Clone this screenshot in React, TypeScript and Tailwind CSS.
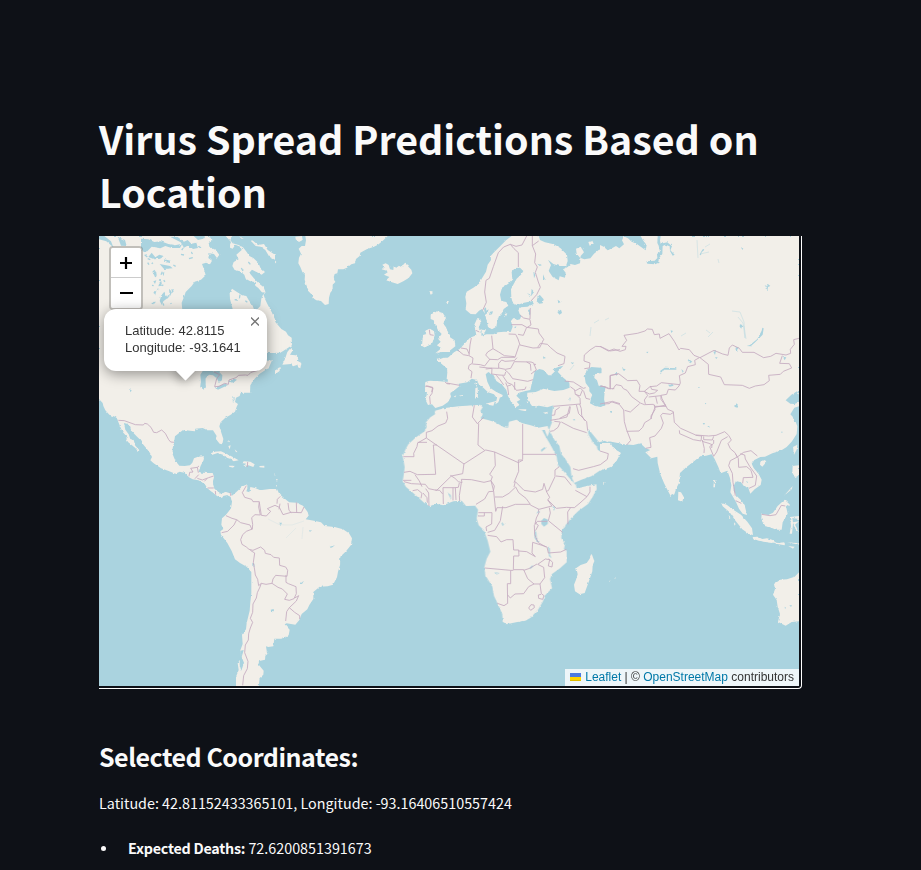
import React from "react";

type Region = {
  at: [number, number];
  land?: string;
  water?: string;
  borders?: string;
};

// Each region is drawn on a grid three times finer than the map, placed by its own origin.
const regions: Region[] = [
  {
    // Canada
    at: [95, 232],
    land: "M12 12H540V364L516 420 490 450 470 460V482H12Z",
    water:
      "M262 235L260 212 268 192 272 180 290 162 299 149 318 143 332 130 327 112 321 96 333 92 345 97 351 86 340 78 343 64 357 66 366 78 373 68 362 54 343 44 341 33 352 26 343 12H392L408 30 402 46 413 50 421 38 438 45 440 54 424 68 431 82 416 90 412 102 419 114 435 118 448 128 452 140 466 148 479 150 481 161 490 168 500 180 512 182 506 166 490 153 476 138 463 122 471 113 486 121 500 128 510 120 496 107 490 92 475 78 463 72 455 60 444 46 431 39 413 34 404 22 412 12H431L440 20 456 18 471 30 482 42 497 44 511 54 523 74 540 83V262L530 240 519 220 511 203 505 186 499 200 496 222 484 235H478L473 221 461 204 454 192 441 190 426 180 411 170 404 184 405 201 414 235ZM364 120L376 104 392 111 399 125 388 137 371 133ZM430 12H540V68L518 54 507 36 489 39 474 26 455 23ZM138 20L160 22 178 30 198 28 220 36 240 40 262 35 255 48 230 48 211 42 196 49 170 44 157 58 145 59 138 45ZM225 14L248 15 267 29 278 24 289 35 304 32 309 48 294 51 280 40 267 47 257 31ZM296 12L309 24 325 20 330 12ZM12 12L28 12 48 28 55 46 34 28 12 22ZM68 14L90 24 95 42 78 41ZM170 62L181 76 193 68 206 72 195 80 178 82 160 75ZM208 82L227 86 222 92 207 89ZM194 96L225 102 233 109 207 111ZM172 119L178 113 185 123 180 134ZM202 124L208 119 206 133ZM175 148L184 145 180 156ZM194 151L199 147 201 161 190 163ZM178 182L185 173 180 191ZM199 190L208 179 218 198 205 208 201 220 194 207ZM222 170L231 180 224 195ZM173 210L183 209 177 216ZM316 428L325 414 343 413 365 422 363 437 354 430 342 428 332 439 331 459 326 471 316 466 318 450ZM357 418L370 417 382 430 381 445 372 451 364 437ZM361 468L372 463 390 455 399 459 385 466 369 473ZM400 448L417 440 426 443 414 453ZM466 460L479 440 493 426 517 410 540 410V482H465ZM478 374L514 363 541 363 541 385 514 386Z",
    borders: "M357 420L374 428 365 440 359 464 372 463 389 454 400 457 402 444 423 437 431 430 451 429 459 430 468 421 489 415",
  },
  {
    // Greenland, Iceland, Labrador and Newfoundland
    at: [270, 232],
    land:
      "M106 12H353L340 25 324 38 312 44 290 52 271 62 269 72 258 81 255 94 244 97 231 107 220 112 204 112 202 124 194 126 191 136 196 150 188 158 188 173 181 182 177 197 176 216 165 219 153 207 139 205 132 200 127 190 117 179 112 167 107 154 104 143 105 128 97 120 91 105 85 94 87 77 93 65 86 50 95 42 105 42 108 25ZM76 14L96 12 98 24 87 30 77 22ZM335 112L344 107 337 98 347 94 356 99 360 112 370 114 371 103 379 107 387 101 395 106 403 94 412 99 416 105 424 113 427 124 416 138 400 148 383 156 366 151 355 147 348 145 358 135 342 128 353 121 350 116ZM0 75L11 81 19 90 11 99 4 117 0 123ZM0 228L14 253 16 270 34 291 48 299 54 310 65 317 66 340 50 350 31 362 0 363ZM65 344L67 357 60 368 77 370 87 379 82 386 94 393 91 409 84 406 81 399 69 403 63 396 37 398 45 381 52 360ZM0 411L17 415 29 405 29 417 16 426 0 435ZM494 241L506 244 499 253 518 242 528 258 519 274 525 287 540 310 540 360 507 360 496 364 515 348 502 340 513 330 505 321 517 306 505 282 497 279 491 265 482 261 482 248ZM459 309L472 305 466 296 480 290 492 298 494 310 486 335 464 346 455 339 464 334 460 324ZM502 384L521 377 540 377V445L530 441 533 411 515 396ZM466 450L480 446 540 450V480H465ZM481 177L488 179 484 188 480 184ZM528 207L536 208 532 217Z",
    borders: "M478 293L480 308 491 310M466 463L473 462 488 466 485 480M525 450L531 455 540 456",
  },
  {
    // Europe
    at: [420, 232],
    land:
      "M275 12L258 25 239 44 225 58 212 72 213 84 203 98 198 119 186 139 177 155 160 167 140 179 136 195 139 214 137 233 152 246 167 247 177 236 186 231 195 245 200 266 204 285 216 292 229 284 232 267 237 252 246 243 251 231 265 221 259 210 244 207 240 188 246 167 265 155 277 141 275 120 285 108 300 107 310 117 303 128 290 140 281 156 273 172 274 196 278 214 291 219 312 212 339 207 341 216 322 224 302 226 295 235 299 246 304 251 300 262 289 265 280 258 273 267 278 284 272 300 253 299 234 301 220 307 200 307 184 311 185 296 176 288 184 267 172 258 163 278 169 310 150 317 135 334 119 351 102 361 83 378 70 385 53 384 62 391 78 400 85 425 83 452 50 448 27 447 15 455 22 466 20 488 17 505 24 519 36 517 46 528 68 521 84 510 93 494 91 483 105 473 118 463 116 455 142 451 155 440 171 444 177 458 190 467 204 481 222 487 231 499 226 517 235 511 240 496 247 497 248 489 228 479 211 468 202 449 197 427 205 420 221 430 229 447 247 459 259 474 264 492 275 513 287 526 299 519 290 509 301 503 289 491 297 482 316 477 331 474 335 455 340 438 344 418 358 411 370 414 385 430 393 430 405 418 398 412 417 404 430 401 413 419 430 437 448 452 449 467 430 474 403 477 371 470 347 480 322 482 321 501 336 522 357 521 382 526 401 520 397 545 395 570H600V34L567 49 537 53 522 65 511 79 493 82 480 77 470 65 468 50 482 44 492 61 482 72 480 94 465 99 452 96 443 105 429 112 437 122 435 137 419 133 416 145 398 135 386 117 393 99 384 83 400 96 420 102 438 102 443 87 441 68 421 48 401 37 375 31 360 24 356 12ZM505 30L517 26 521 35 509 41ZM38 250L50 238 66 242 62 252 76 253 70 275 78 286 89 315 104 325 106 343 91 355 55 362 49 366 65 349 51 340 63 329 55 320 65 306 53 293 50 278 42 273 44 263 33 258ZM8 317L20 308 15 299 25 292 42 298 42 320 33 336 14 346 6 342ZM28 177L38 179 33 187ZM79 207L86 208 82 217ZM187 293L198 295 191 305 180 301ZM210 239L219 238 216 247 207 249ZM254 246L262 244 257 256ZM197 515L225 508 220 521 208 519ZM166 469L173 466 174 494 165 500ZM166 452L172 451 170 466ZM101 494L109 490 106 496ZM117 491L129 489 128 494ZM294 532L319 532 318 538 302 535ZM369 542L385 539 378 546ZM345 525L350 521 349 528ZM320 508L325 511 322 514Z",
    water:
      "M500 414L514 405 542 407 544 423 524 427 523 438 531 445 536 461 549 463 553 474 545 482 552 492 553 515 541 525 525 522 510 514 512 500 517 488 508 478 508 468 497 453 494 434ZM353 195L359 188 371 202 368 214 358 215 350 208ZM324 234L330 232 331 247 328 250ZM192 230L198 226 199 236 206 232 202 244 195 248ZM412 240L423 233 426 243 418 248ZM413 203L422 210 415 214ZM352 95L366 99 359 102ZM340 115L346 130 342 139ZM369 127L375 142 369 143ZM335 170L342 180 333 193ZM325 184L332 190 328 195ZM369 373L378 378 370 380ZM452 392L461 391 459 397ZM570 538L576 537 573 544ZM448 497L452 497 450 509ZM283 285L289 283 286 292Z",
    borders:
      "M188 235L199 211 194 180 198 145 208 139 220 104 235 62 251 45 271 37 288 43 306 39 320 12M271 37L282 50 295 62V105M337 12L337 41 356 27M337 41L347 66 344 92 352 105 346 121 355 150 361 166 350 188 333 207M301 250L311 258 330 262 331 228M274 278L306 278 320 286 355 291 357 303 371 322 359 347 339 348 300 339 294 321 287 307 266 306M320 286L310 310 294 307M330 264L333 279 322 286M215 311L219 350 203 360 197 369 209 382 233 383 245 376 285 376 298 338M219 350L236 360 253 371 284 374M154 318L150 339 147 371 159 378 157 394 147 400 145 411 156 419 153 438M113 354L130 368 146 371M123 348L141 351 147 365M157 396L181 398 194 402 210 381M178 405L204 408 236 409 236 395 245 384 255 388 283 386 291 377M236 408L256 412 272 409 283 389 333 390 341 393 349 414 333 426M320 390L331 396 333 416M348 397L341 398M255 414L266 423 278 440 323 448 339 443M197 411L216 409 215 426 237 429 254 430 257 420M229 430L240 443 251 459M248 431L262 452 277 458 289 475 315 472 318 464M257 452L263 466 266 489M284 450L284 473M263 462L273 459M119 460L80 453M18 462L39 468 36 484 29 494 31 516M167 295L178 300M353 346L361 334 382 337 392 347 411 363 435 373 432 395 414 401M434 447L460 450 490 469 497 467M451 464L467 476 481 468 491 478 498 499 510 502M464 474L466 487 480 492 487 475M400 523L481 516 480 499 468 487M419 526L406 535 404 549 395 550M451 524L448 544 419 559M479 516L484 530 485 550 494 566M493 410L508 408 510 393 492 387 493 369 510 354 527 343 543 344 570 357 600 353M544 461L565 470 583 470M570 470V431L595 426M552 516L567 515 577 508 600 515",
  },
  {
    // Siberia and Central Asia
    at: [600, 232],
    land: "M0 12H597V570H0Z",
    water:
      "M0 12H72L66 25 72 37 58 49 48 42 33 50 23 55 11 44 0 39ZM69 12H122L129 25 140 39 137 55 120 43 111 36 95 29 84 19ZM173 12H182L180 26 182 35 202 31 216 43 211 55 224 68 218 71 210 57 209 43 196 38 188 42 187 66 178 77 174 93 165 97 142 95 139 88 164 86 172 78 171 66 180 60 176 41 172 33ZM0 460L17 464 14 479 12 503 16 520 0 524ZM0 406L5 410 4 424 0 423ZM181 427L181 416 194 407 229 409 229 413 192 413 187 421ZM440 342L450 339 472 321 485 296 487 287 491 289 488 308 467 329 452 343ZM557 505L574 488 591 478 597 488V511L583 516 571 515ZM571 547L583 527 597 523V570H583L578 554ZM205 459L217 456 221 461 209 464ZM340 359L348 357 345 369ZM345 376L353 376 349 381ZM405 521L413 520 412 527 405 525ZM291 465L299 465 298 468ZM312 514L319 513 317 517ZM407 346L413 346 411 359 407 356ZM549 375L559 376 554 385ZM261 381L270 384 277 389 270 394ZM66 409L77 412 72 418ZM44 424L52 423 50 432ZM30 538L37 538 34 543ZM138 360L145 359 143 364ZM212 295L219 297 214 303ZM244 411L251 418 248 422ZM424 48L430 49 427 54ZM501 154L511 162 504 165 502 178 500 168 494 160 503 163ZM420 277L427 279 424 290 419 284ZM299 67L308 52 316 51 305 61 302 73Z",
    borders:
      "M0 343L25 357 42 351 60 358 76 353 78 343 66 343 80 325 72 310 112 304 135 297 142 291 157 292 163 308 178 306 180 319 207 305 223 328 237 354 242 349 268 353 282 370 300 377 342 355 368 366 384 370 388 348 397 339 418 349 427 361 462 361 491 377 512 373 528 364 558 369 572 364 571 352 583 337 581 323 597 319M300 377L325 397 326 427 362 435 373 458 427 460 448 469 466 462 492 458 508 446 506 430 541 427 550 418 575 408 568 395 539 394 547 371M298 377L284 385 286 398 263 404 256 423 238 431 241 453 237 462 226 474 205 472 200 487 183 490 186 500M0 463L15 464 31 471V430L56 425 83 446 111 445 120 461 117 478 133 478 150 464 170 462 184 452 239 458M38 472L48 458 64 461 70 470 81 475 95 494 121 513 133 518 160 517 165 523 198 523 183 502 183 491 146 495M133 478L148 486 163 483 173 475 155 472 151 462M133 478L143 490 133 504 136 516",
  },
  {
    // United States, Mexico and the Caribbean
    at: [95, 380],
    land:
      "M12 0H468L467 23 449 35 437 38 434 48 423 53 420 66 429 72 425 80 420 95 406 105 391 113 377 127 373 139 379 158 385 177 382 193 374 191 362 176 365 168 354 151 337 151 323 144 301 146 300 154 285 152 269 150 259 154 240 169 237 188 233 205 233 223 241 242 253 257 269 258 285 256 292 248 297 235 309 230 327 229 326 240 317 257 311 275 320 278 343 279 356 286 354 305 355 323 365 332 379 343 391 336 406 340 414 350 411 360 408 350 397 345 386 346 381 354 374 351 362 342 348 334 337 325 328 310 310 301 293 298 282 292 268 278 254 275 241 281 221 273 198 265 175 249 166 241 171 231 165 219 154 205 144 193 134 178 124 168 109 152 105 140 98 132 87 129 91 149 101 163 106 177 116 180 121 197 133 210 130 216 121 204 111 196 99 186 94 177 96 170 83 156 77 143 70 126 66 115 60 110 43 104 31 91 25 78 23 69 12 57ZM348 220L357 215 378 214 400 224 412 230 431 241 416 244 407 237 391 232 386 225 368 219 350 225ZM440 249L447 244 466 245 479 253 475 261 460 256 444 259 454 251ZM401 257L415 257 415 263 403 260ZM493 258L508 257 508 263 494 262ZM400 198L407 196 404 208ZM396 180L403 183 399 186ZM419 208L427 215 423 217ZM539 279L543 284 539 287ZM543 300L548 300 546 306ZM543 316L546 315 545 322Z",
    water: "M318 0L330 0 333 22 326 29 317 20ZM102 27L110 31 107 37ZM359 23L382 14 395 10 388 19 366 26ZM412 47L419 58 414 70Z",
    borders: "M70 121L88 122 121 134 145 135 149 130 157 132 168 142 176 157 185 158 200 150 211 160 221 179 227 186 237 187M282 289L284 277 294 276 287 265 307 262 310 278M307 262L312 258M300 296L311 284M307 295L322 300 341 293 356 288M328 304L336 296M338 324L356 324M361 333L362 344M405 337L408 348M458 246L457 261",
  },
  {
    // South America
    at: [200, 470],
    land:
      "M92 81L109 66 121 55 130 48 142 43 142 56 139 64 148 67 151 51 165 54 181 61 209 57 231 57 238 72 259 90 268 97 289 98 309 107 323 126 326 137 317 148 342 152 363 157 374 168 404 171 429 178 447 190 456 205 453 225 438 244 421 260 420 286 414 305 411 322 399 344 383 349 359 350 340 366 340 387 328 405 322 418 305 432 298 450 286 464 260 460 254 463 269 479 266 496 244 506 223 506 220 529 205 531 198 529 200 542 206 549 196 557 195 569 178 573 175 583 191 602 190 614 179 624 176 651H108L108 620 116 600 113 580 121 568 121 541 128 522 126 494 138 478 140 459 149 422 151 397 154 370 154 306 140 290 120 279 105 268 95 243 82 219 63 194 61 184 70 177 64 164 66 145 77 135 84 127 93 115 96 95ZM0 10L38 9 42 20 37 38 43 55 36 64 25 54 15 42 0 33ZM37 53L62 71 77 67 92 72 93 81 82 75 67 78 61 84 47 75 34 63Z",
    water: "M157 278L163 281 164 291 157 287ZM212 419L221 417 222 424 213 423ZM389 230L405 226 395 233ZM236 158L246 158 242 168ZM300 341L312 332 306 342ZM327 180L333 182 330 187ZM121 542L131 540 125 561 132 578 124 602 119 585ZM199 544L207 547 203 553Z",
    borders:
      "M139 47L127 68 134 82 155 88 159 95H178L176 111 181 135 165 134 155 143 158 163 157 177 139 184 128 194 122 209 126 223 139 231 147 238 159 241 182 231 194 241 196 250 213 254 221 262 238 264 239 286 257 291 263 301 261 319 227 316 219 327 216 340 198 343 184 340 176 347 173 328 166 315 164 300 160 277 164 249 151 241M78 137L96 145 110 149 102 165 83 184 65 188M110 149L122 158 150 165 156 179M178 97L180 111 184 136 199 138 212 124 202 116 225 106 238 112 249 134 273 127 304 128 312 111M231 101L232 88 241 79M240 101L237 118M264 99L267 121 274 128M289 97L290 127M216 340L234 352 247 357 262 372 254 388 268 391 282 386 289 371 288 350 265 341 258 337 258 315M284 384L296 377 289 393 268 413 260 425 257 453M268 413L284 427 299 437 299 447M184 340L180 351 172 368 169 384 159 402 158 427 151 445 158 457 151 474 146 491 145 510 136 525 134 548 144 574 142 596 131 617 128 646",
  },
  {
    // Africa and Arabia
    at: [395, 395],
    land:
      "M120 47L150 39 191 34 238 31 255 29 263 37 256 48 263 57 257 70 276 74 299 81 327 97 339 98 342 80 365 74 380 84 407 91 430 98 458 93 463 110 457 125 449 105 441 105 452 125 468 152 485 185 489 210 502 224 516 241 530 257 543 271 545 280 573 274 604 268 605 283 594 304 579 327 550 348 528 370 512 390 500 409 499 430 510 447 507 462 515 471 515 502 495 520 471 537 465 552 471 580 449 602 444 619 430 643 407 668 391 677 363 682 335 688 323 680 322 658 307 624 297 603 292 575 271 541 268 517 275 491 286 470 278 437 266 405 251 391 245 371 249 344 240 332 213 333 200 317 175 319 144 331 123 326 104 334 88 324 68 306 51 291 33 276 23 259 27 235 29 216 25 194 23 184 32 162 40 148 63 127 89 109 95 96 93 82 106 67 120 58ZM475 31L545 23 552 0H660V130L638 142 629 137 612 142 597 123 579 101 580 118 594 143 605 154 608 164 618 171 637 164 649 144 653 159 677 175 663 196 646 213 616 226 589 244 559 254 537 264 529 241 526 216 511 192 498 176 493 153 478 134 466 112 463 102 471 82 472 58Z",
    water: "M439 377L447 369 459 374 458 387 447 395 439 387ZM420 407L424 411 425 427 433 440 426 442 418 427ZM459 455L464 456 465 479 470 490 462 484ZM473 332L480 337 477 349ZM424 356L430 347 435 351ZM405 523L414 515 413 510 404 518ZM302 532L313 534 305 539ZM318 380L327 388 323 394ZM157 292L167 300 169 315ZM439 171L452 160 449 156 438 164ZM534 72L541 73 538 78Z",
    borders:
      "M155 50L158 70 152 84 129 93 111 107 94 112V129L207 207 272 165 299 171 370 203 384 195H370L371 229 357 263M383 87V193M383 178H484M94 129L68 144 66 155 56 175 57 185H25M115 150L122 238 67 239 45 229 27 232M115 150H126M68 142H96M207 205L203 236 169 243 125 286 101 281 91 268 49 266 27 260M60 239L73 258 81 275M24 256H49M166 241L180 250 190 260 201 263 199 253 229 254 267 262 288 257 292 245 284 238 301 212 299 171M251 85L249 150 269 166M238 31L232 66 247 86 266 67M193 264L190 277 180 278 144 278 145 327M174 278V316M181 278L183 315M199 263L193 302 194 318M121 285L134 286 143 297M84 294L96 308 97 323M53 287L68 284 81 295 78 310M92 281L101 294 102 333M288 257L298 273 295 289 281 290 269 312 243 328M288 257L296 289 302 348M300 306L323 306 342 295 362 276 371 293 393 310 406 328 361 328 333 338 306 338 302 350M357 276L361 260 387 286 421 291 443 283 447 265 455 291 464 307 458 315 471 333 432 343 406 330M493 215L480 225 480 245 460 287 453 289M483 243L509 246 529 271M459 315L484 340 514 337 538 338 555 324 576 305 585 291 585 275M541 286L576 305M519 388L518 351 526 339M463 338L466 354 460 377 503 412M427 379H457M427 379L418 391 419 419 430 443 453 456M421 384L430 391 422 406M430 343L432 353 424 369 420 387M250 353H291M249 363H268V353M291 353L290 387 273 396 275 408M323 334L316 377 299 406 278 412M278 421L305 425 318 441 335 434H354L356 465H371L372 483H356L355 524H386L398 551 417 567H435L449 548 446 517 428 508 451 492 464 494 460 513 471 516 473 502 461 491M371 468L395 470 421 485 411 474 413 442 456 456 460 474 497 471 514 463M269 519L347 526H355M347 526V566H337L338 625 327 632 307 625M338 600L346 609 360 597 386 596 401 575 417 567M435 567L439 596 447 602 443 613 431 610 430 600 438 598M401 639L408 629 417 630 418 638 407 646ZM386 526L404 520 426 507M466 76L491 72 516 66 524 34M478 79L496 81 489 97 476 107 466 109M499 81L535 100 575 113M544 29L551 56 575 80 578 107M534 221L551 226 595 215 616 209 637 193 640 176 615 168",
  },
  {
    // India, China and South-East Asia
    at: [600, 380],
    land:
      "M0 0H597V35L581 47 563 57 559 68 570 73 583 69 597 74 586 85 574 94 584 108 585 121 592 139 590 162 575 185 560 201 542 212 517 220 495 230 481 231 463 240 455 251 461 264 476 282 485 299 482 315 464 328 451 341 445 324 432 319 423 307 408 303 402 316 401 332 410 348 425 362 435 380 441 405 428 401 417 386 408 366 391 337 394 316 390 294 382 272 362 280 355 261 344 237 335 223 318 227 301 229 280 245 257 263 240 279 237 309 229 325 223 343 212 348 204 333 192 309 181 283 173 249 172 230 154 235 136 217 151 210 137 205 121 190 100 195 72 193 34 185 0 178ZM0 189L30 189 39 205 62 218 50 242 32 261 0 272ZM235 335L243 337 251 350 247 365 234 361ZM481 245L495 240 499 246 487 260 480 254ZM579 201L592 194 590 209 582 224ZM364 369L380 374 401 390 423 404 442 425 456 445 459 465 447 462 427 448 407 423 389 397 368 379ZM458 471L472 470 487 477 501 475 516 479 530 489 507 487 480 482 460 478ZM485 402L505 405 519 398 533 378 547 365 554 359 570 374 558 378 563 401 548 427 545 449 529 449 508 441 496 439 484 416ZM578 258L597 256V287L586 294 577 278ZM552 347L578 318 575 328ZM570 411L597 408V417L577 414 579 427 597 424 585 434 597 456 587 448 579 432 576 461 569 461 573 438ZM540 488L553 487 552 494ZM562 487L597 490 596 494ZM342 301L346 300 345 322 340 322ZM386 404L391 412 388 415ZM402 427L407 432 403 437ZM9 306L18 308 10 311Z",
    water: "M0 18L13 18 11 63 16 76 0 81ZM402 77L412 73 412 80 404 80ZM308 129L315 129 312 135ZM322 139L328 138 328 144ZM438 303L444 306 442 309ZM543 155L548 155 546 160Z",
    borders:
      "M0 72L33 65 58 73 71 90 73 125 80 150 92 181 80 195M74 91L91 96 119 71M163 74L165 89 153 108 154 117M80 154L117 153 128 142 134 128 152 117 165 82 198 75M172 71L167 49M186 56L203 88 220 95 223 127 242 145 287 165 326 168 348 166 374 155 386 166 394 180 384 191 391 206 405 218 412 231 431 217 453 212 472 228M238 151L239 161 280 179 303 183 305 168 287 166M221 97L211 103 188 100 182 107 190 129 184 145 165 168 149 173 153 202 137 205M311 169V179L337 180 341 169M307 180L313 206 312 219M306 184L327 190 336 194 335 204M341 180L341 190 329 200 341 229 350 216 364 181 383 170M412 231L391 242 386 257 397 280 399 307 406 347M407 223L415 235 416 262 440 260 453 271 459 292 430 293 428 310M421 221L434 225 436 237 449 259 470 288 466 316 447 325M407 362L424 370M485 403L510 407 528 404 544 376 556 378",
  },
  {
    // Madagascar and Australia
    at: [560, 540],
    land:
      "M95 41L103 64 98 75 97 94 86 126 74 159 59 163 45 154 42 134 48 119 53 103 49 84 62 75 80 69 89 56ZM717 97L704 110 681 118 661 119 642 132 645 148 639 164 650 180 653 200 660 222 654 245 666 252 677 257 695 246 717 244ZM591 0L638 0 637 9 612 5ZM645 8L675 10 674 16 648 11ZM685 18L704 20 699 26ZM144 121L151 121 149 125ZM163 113L167 112 165 117Z",
    water: "M688 196L696 196 693 201ZM674 200L678 203 675 207Z",
  },
];

const canadianLakes =
  "M158 80l8 3M188 78l12-2M158 92l4 6M235 99l7 4M198 128l4-9M181 135l3-8M192 144l6 1M171 160l5 1M201 161l4-3M187 171l5 2M177 184l3-6M217 199l4-9M205 214l1 7M227 213l2 3M170 214l6 1M230 172l5 7M311 43l7 5M287 60l6 5M282 80l11-3M258 67l9 2M335 115l8 4M439 108l5 9M460 90l6 7M451 206l6 5M486 64l6 7M435 188l-2 11M419 203l7 1M276 39l15 2M260 54l5-5M149 68l8 7M170 95l4-3M206 145l4 4";
const fineRivers =
  "M697 240l1 18M705 247l5-3M700 254l9-2M718 259l1 4M732 311l8 1 4 10 1 16-2-15-5-6M744 326l2 13M681 336l5-3M708 337l5-5M710 333l-4-3M591 327l-1 9M594 323l5-3M605 320l4-2M574 365l-4 5";
const faintRivers = "M268 519l10 5 6 1 8 0 12-4M303 527l-1 12M296 528l-10 10";

function WorldMap() {
  return (
    <svg className="block h-full w-full" viewBox="99 236 700 450" aria-label="World map">
      <defs>
        <filter id="coast" x="0" y="0" width="100%" height="100%">
          <feTurbulence type="fractalNoise" baseFrequency="0.28" numOctaves="2" seed="7" result="noise" />
          <feDisplacementMap in="SourceGraphic" in2="noise" scale="2.4" xChannelSelector="R" yChannelSelector="G" />
        </filter>
      </defs>
      <rect x="90" y="226" width="720" height="470" fill="#aad3df" />
      <g filter="url(#coast)">
        {regions.map(({ at, land }) => (
          <path key={at.join()} d={land} fill="#f2efe9" transform={`translate(${at[0]} ${at[1]}) scale(.333333)`} />
        ))}
        {regions.map(({ at, water }) => (
          <path key={at.join()} d={water} fill="#aad3df" transform={`translate(${at[0]} ${at[1]}) scale(.333333)`} />
        ))}
        <path d={canadianLakes} fill="none" stroke="#aad3df" strokeWidth="4" transform="translate(95 232) scale(.333333)" />
      </g>
      <path d={fineRivers} fill="none" stroke="#c4dee2" strokeWidth=".6" />
      <path d={faintRivers} fill="none" stroke="#dbe6e5" strokeWidth=".6" />
      {regions.map(({ at, borders }) => (
        <path
          key={at.join()}
          d={borders}
          fill="none"
          stroke="#c5abc0"
          strokeWidth="2.6"
          strokeLinejoin="round"
          transform={`translate(${at[0]} ${at[1]}) scale(.333333)`}
        />
      ))}
    </svg>
  );
}

function ZoomControl() {
  return (
    <div className="absolute left-[10px] top-[10px] w-[34px] rounded-[4px] border-2 border-black/20 bg-clip-padding">
      <button className="flex h-[30px] w-[30px] items-center justify-center rounded-t-[2px] border-b border-[#ccc] bg-white" aria-label="Zoom in">
        <svg className="mt-px" width="12" height="12" viewBox="0 0 12 12"><path d="M0 6H12M6 0V12" stroke="black" strokeWidth="2.2" /></svg>
      </button>
      <button className="flex h-[30px] w-[30px] items-center justify-center rounded-b-[2px] bg-white" aria-label="Zoom out">
        <svg className="ml-px" width="13" height="2"><path d="M0 1H13" stroke="black" strokeWidth="2" /></svg>
      </button>
    </div>
  );
}

function Popup() {
  return (
    <div className="absolute left-[5px] top-[73px] h-[62px] w-[163px] [font-family:'Liberation_Sans',sans-serif]">
      <div className="absolute left-[73px] top-[54px] h-[17px] w-[17px] rotate-45 scale-75 bg-white shadow-[0_3px_14px_rgba(0,0,0,0.4)]" />
      <div className="relative h-full rounded-[12px] bg-white pl-[21px] pt-[13px] text-[13px] leading-[17px] text-[#333] shadow-[0_3px_14px_rgba(0,0,0,0.4)]">
        <p className="whitespace-nowrap">Latitude: 42.8115</p>
        <p className="whitespace-nowrap">Longitude: -93.1641</p>
        <svg className="absolute right-[8px] top-[8px]" width="8" height="9" viewBox="0 0 8 9" aria-label="Close popup">
          <path d="M0 .5L8 8.5M8 .5L0 8.5" stroke="#757575" strokeWidth="1.3" />
        </svg>
      </div>
      <svg className="absolute left-[72px] top-[62px]" width="19" height="10"><path d="M0 0H19L9.5 9.5Z" fill="white" /></svg>
    </div>
  );
}

export default function App() {
  return (
    <main className="h-[870px] overflow-hidden bg-[#0e1117] pl-[99px] pt-[111px] text-[#fafafa] [font-family:'Noto_Sans_CJK_SC','Noto_Sans_CJK_JP',sans-serif]">
      <h1 className="h-[125px] w-[704px] whitespace-nowrap text-[39.35px] font-bold leading-[53px]">
        Virus Spread Predictions Based on
        <br />
        Location
      </h1>
      <div className="h-[453px] w-[703px] rounded-br-[4px] border-b border-r border-white">
        <section className="relative h-[450px] w-[700px] overflow-hidden">
          <WorldMap />
          <ZoomControl />
          <Popup />
          <footer className="absolute bottom-0 right-0 flex h-[17px] w-[234px] items-center whitespace-nowrap bg-white/80 px-[5px] text-[12px] leading-[17px] text-[#333] [font-family:'Liberation_Sans',sans-serif]">
            <svg className="mb-px mr-[4px]" width="12" height="8"><path fill="#4C7BE1" d="M0 0h12v4H0z" /><path fill="#FFD500" d="M0 4h12v3H0z" /><path fill="#E0BC00" d="M0 7h12v1H0z" /></svg>
            <span className="whitespace-pre"><span className="text-[#0078a8]">Leaflet</span> | © <span className="text-[#0078a8]">OpenStreetMap</span> contributors</span>
          </footer>
        </section>
      </div>
      <h3 className="mt-[50px] h-[34px] whitespace-nowrap text-[25px] font-bold leading-[34px] tracking-[-0.48px]">Selected Coordinates:</h3>
      <p className="mt-[18px] h-[24px] whitespace-nowrap text-[14.33px] leading-[24px]">Latitude: 42.81152433365101, Longitude: -93.16406510557424</p>
      <ul className="mt-[21px] text-[14.33px] leading-[24px]">
        <li className="flex items-center whitespace-nowrap">
          <span className="ml-[2px] mr-[22px] size-[5px] rounded-full bg-[#fafafa]" />
          <span><strong className="tracking-[-0.25px]">Expected Deaths:</strong> 72.6200851391673</span>
        </li>
      </ul>
    </main>
  );
}
